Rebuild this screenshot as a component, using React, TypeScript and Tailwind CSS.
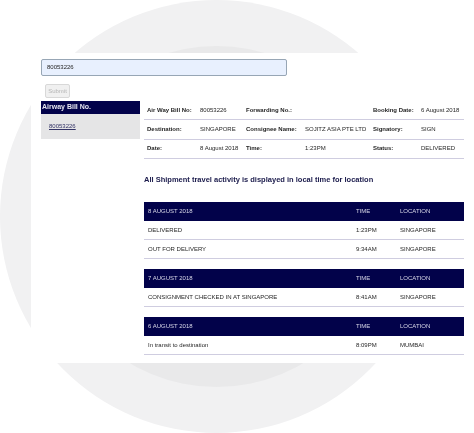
const cell = "text-[6px] leading-[9px] text-[#262626]";

function Info({ rows }: { rows: string[][] }) {
  return (
    <div className="flex flex-col">
      {rows.map((r, i) => (
        <div key={i} className="grid h-[19.3px] grid-cols-[53px_46px_59px_68px_48px_1fr] items-center border-b border-[#cfcde0] pl-[3px]">
          {r.map((t, j) => (
            <span key={j} className={`${cell} ${j % 2 === 0 ? "font-bold" : ""} whitespace-nowrap`}>{t}</span>
          ))}
        </div>
      ))}
    </div>
  );
}

function Activity({ date, rows }: { date: string; rows: string[][] }) {
  const grid = "grid grid-cols-[208px_44px_1fr] items-center pl-1 h-[19.2px]";
  return (
    <div className="flex flex-col">
      <div className={`${grid} bg-[#02024a] text-[6px] leading-[9px] text-[#d9d9e8]`}>
        <span>{date}</span><span>TIME</span><span>LOCATION</span>
      </div>
      {rows.map((r, i) => (
        <div key={i} className={`${grid} border-b border-[#cfcde0] pt-[1px] ${cell}`}>
          {r.map((t, j) => <span key={j} className="whitespace-nowrap">{t}</span>)}
        </div>
      ))}
    </div>
  );
}

export default function App() {
  return (
    <div className="h-[433px] w-[474px] overflow-hidden bg-white font-['Liberation_Sans',sans-serif]">
      <div className="relative h-[433px] w-[474px] blur-[0.35px]">
        <div className="absolute left-0 top-0 h-[433px] w-[433px] rounded-full bg-[#f1f1f2]" />
        <div className="absolute left-[46px] top-[46px] h-[341px] w-[341px] rounded-full bg-[#e9e9ea]" />
        <div className="relative ml-[31px] mt-[53px] inline-block h-[310px] w-[443px] bg-white pl-[10px] pr-[10px] pt-[6px] align-top">
          <div className="flex h-[17px] w-[246px] items-center rounded-[2px] border-[1.5px] border-[#97a6b5] bg-[#e8f0fe] pl-[5px] text-[6px] text-[#262626]">80053226</div>
          <div className="ml-1 mt-[8px] flex h-[14px] w-[25px] items-center justify-center rounded-[2px] border border-[#d8d8d8] bg-[#f0f0f0] text-[6px] text-[#b5b5b5]">Submit</div>
          <div className="mt-[3px] grid grid-cols-[99px_320px] gap-x-[4px]">
            <div>
              <div className="flex h-[13px] items-center bg-[#02024a] pl-[1px] text-[7px] font-bold text-[#e6e6f0]">Airway Bill No.</div>
              <div className="h-[25px] bg-[#e5e5e6] pl-[8px] pt-[8px] text-[6px] leading-[9px] text-[#333366] underline">80053226</div>
            </div>
            <div className="flex flex-col">
              <Info rows={[
                ["Air Way Bill No:", "80053226", "Forwarding No.:", "", "Booking Date:", "6 August 2018"],
                ["Destination:", "SINGAPORE", "Consignee Name:", "SOJITZ ASIA PTE LTD", "Signatory:", "SIGN"],
                ["Date:", "8 August 2018", "Time:", "1:23PM", "Status:", "DELIVERED"],
              ]} />
              <h2 className="mt-[15px] h-[12px] text-[7.5px] font-bold leading-[12px] text-[#1a1a4b]">All Shipment travel activity is displayed in local time for location</h2>
              <div className="mt-[16px] flex flex-col gap-[9.5px]">
                <Activity date="8 AUGUST 2018" rows={[["DELIVERED", "1:23PM", "SINGAPORE"], ["OUT FOR DELIVERY", "9:34AM", "SINGAPORE"]]} />
                <Activity date="7 AUGUST 2018" rows={[["CONSIGNMENT CHECKED IN AT SINGAPORE", "8:41AM", "SINGAPORE"]]} />
                <Activity date="6 AUGUST 2018" rows={[["In transit to destination", "8:09PM", "MUMBAI"]]} />
              </div>
            </div>
          </div>
        </div>
      </div>
    </div>
  );
}
